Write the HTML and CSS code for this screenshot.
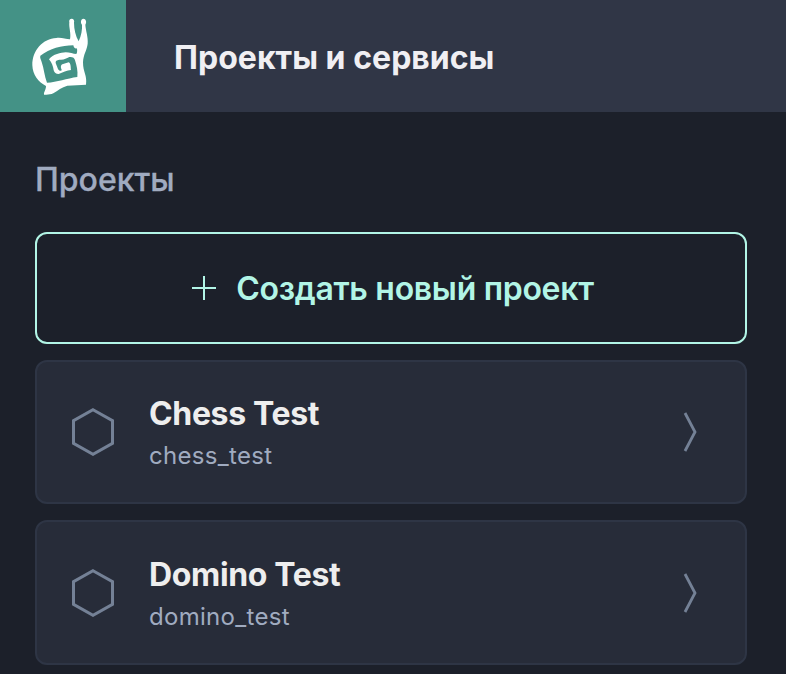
FILE: index.html
```html
<!DOCTYPE html>
<html lang="ru">
<head>
<meta charset="utf-8">
<title>Проекты и сервисы</title>
<link rel="stylesheet" href="styles.css">
</head>
<body>
<header class="header">
  <a class="logo" aria-label="Logo">
    <svg viewBox="0 0 378 336">
      <path class="shell" fill-rule="evenodd" d="M208 67C206 61 210 56 215 56C221 56 224 61 222 68C222 88 227 108 236 124C244 107 247 88 246 74C241 68 242 57 250 56C258 56 261 67 256 74C257 92 265 111 263 131C261 151 250 162 249 187C249 217 262 226 258 254L202 257C185 261 174 272 160 280C151 284 142 285 132 284C131 275 138 270 138 258C115 247 98 224 97 196C96 151 129 116 169 114C184 112 197 117 210 118C214 101 206 82 208 67ZM220 136C184 136 150 146 121 167C119 174 123 178 125 186C132 206 133 228 141 248C171 247 201 235 232 231C234 212 230 197 225 181C224 173 217 170 208 171C198 175 192 181 178 179C170 180 166 183 167 189L174 207C177 213 184 215 185 209C181 203 182 195 187 193L206 187C213 189 212 204 213 210C201 211 188 218 176 222C167 222 164 219 161 211C160 200 155 188 147 178C159 162 183 158 197 157C209 157 220 162 229 162C233 156 231 149 231 145C225 147 221 143 220 136Z"/>
    </svg>
  </a>
  <h1 class="title">Проекты и сервисы</h1>
</header>
<main class="main">
  <h2 class="section-title">Проекты</h2>
  <button class="create" type="button">
    <svg class="plus" viewBox="0 0 24 24"><path d="M12 0V24M0 12H24"/></svg>
    <span class="create-label">Создать новый проект</span>
  </button>
  <a class="card">
    <svg class="hexagon" viewBox="0 0 42 48"><path d="M21 1.7L40.5 12.7V35.3L21 46.3L1.5 35.3V12.7Z"/></svg>
    <div class="info">
      <div class="name">Chess Test</div>
      <div class="slug">chess_test</div>
    </div>
    <svg class="chevron" viewBox="0 0 14 40"><path d="M2 1L12 20L2 39"/></svg>
  </a>
  <a class="card card-last">
    <svg class="hexagon" viewBox="0 0 42 48"><path d="M21 1.7L40.5 12.7V35.3L21 46.3L1.5 35.3V12.7Z"/></svg>
    <div class="info">
      <div class="name">Domino Test</div>
      <div class="slug">domino_test</div>
    </div>
    <svg class="chevron" viewBox="0 0 14 40"><path d="M2 1L12 20L2 39"/></svg>
  </a>
</main>
</body>
</html>
```
FILE: styles.css
```css
* { box-sizing: border-box; }
body {
  margin: 0;
  min-height: 674px;
  background: #1c202a;
  color: #eeeeee;
  font-family: Inter, "Liberation Sans", sans-serif;
}
svg { display: block; flex: none; }
.header {
  display: flex;
  align-items: center;
  height: 112px;
  background: #303646;
}
.logo { width: 126px; height: 112px; background: #449286; }
.shell { fill: #ffffff; }
.title {
  margin: 0 0 0 48px;
  padding-top: 3px;
  font-size: 32px;
  line-height: 40px;
  font-weight: 700;
  letter-spacing: 0.03px;
  color: #f0eff3;
}
.main { padding: 48px 39px 0 35px; }
.section-title {
  margin: 0 0 32px;
  font-size: 32px;
  line-height: 40px;
  font-weight: 500;
  color: #a0abc0;
  -webkit-text-stroke: 0.3px #a0abc0;
}
.create {
  display: flex;
  align-items: center;
  justify-content: center;
  gap: 20px;
  width: 100%;
  height: 112px;
  padding: 0 0 0 4px;
  border: 2px solid #b2f5e6;
  border-radius: 12px;
  background: none;
  color: #b2f5e6;
  font: 600 32px/40px Inter, "Liberation Sans", sans-serif;
}
.create-label { padding-top: 2px; letter-spacing: -0.3px; }
.plus { width: 24px; height: 24px; fill: none; stroke: #b2f5e6; stroke-width: 2; }
.card {
  display: flex;
  align-items: center;
  height: 144px;
  margin-top: 16px;
  padding: 0 48px 0 35px;
  border: 2px solid #2e3545;
  border-radius: 12px;
  background: #272c39;
}
.card-last { height: 145px; }
.hexagon { width: 42px; height: 48px; fill: none; stroke: #748196; stroke-width: 3; }
.info { flex: 1; margin-left: 35px; padding-top: 4px; }
.name { font-size: 32px; line-height: 44px; font-weight: 700; letter-spacing: -0.35px; }
.slug { font-size: 24px; line-height: 40px; letter-spacing: 0.3px; color: #a0abc0; }
.chevron { width: 14px; height: 40px; fill: none; stroke: #748196; stroke-width: 2.8; }
```
